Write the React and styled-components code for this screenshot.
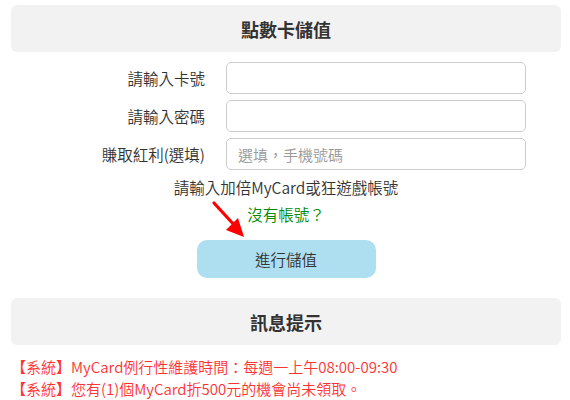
import styled, { createGlobalStyle } from 'styled-components'

const GlobalStyle = createGlobalStyle`
    body {
        margin: 0;
        background: #fff;
        font-family: "Noto Sans CJK TC", "Noto Sans", sans-serif;
        font-weight: 350;
        color: #333;
    }
`

const Page = styled.div`
    width: 550px;
    padding: 5px 9px 0 11px;
`

const Panel = styled.div`
    background-color: #f2f2f2;
    border-radius: 6px;
    height: 47px;
    display: flex;
    align-items: center;
    justify-content: center;
    font-size: 18px;
    font-weight: bold;
    color: #333;
    margin-top: ${props => props.$top || 0}px;
`

const Form = styled.div`
    display: grid;
    grid-template-columns: 194px 300px;
    column-gap: 21px;
    row-gap: 6px;
    margin-top: 10px;
`

const Label = styled.label`
    text-align: right;
    font-size: 15.5px;
    line-height: 32px;
    color: #333;
`

const Input = styled.input`
    box-sizing: border-box;
    height: 32px;
    border: 1px solid #ccc;
    border-radius: 5px;
    padding: 0 11px;
    font-family: inherit;
    font-weight: inherit;
    font-size: 15px;
    color: #333;
    outline: none;

    &::placeholder {
        color: #999;
    }
`

const Center = styled.div`
    position: relative;
    display: flex;
    flex-direction: column;
    align-items: center;
    margin-top: 4px;
`

const Note = styled.div`
    font-size: 15.5px;
    line-height: 27px;
    color: ${props => props.$color || '#333'};
`

const Button = styled.button`
    width: 179px;
    height: 38px;
    margin-top: 12px;
    border: none;
    border-radius: 10px;
    background-color: #addff0;
    color: #333;
    font-family: inherit;
    font-weight: inherit;
    font-size: 15.5px;
    cursor: pointer;
`

const Arrow = styled.svg`
    position: absolute;
    left: 200px;
    top: 26px;
`

const Messages = styled.div`
    margin-top: 11px;
    color: #ff3333;
    font-size: 15px;
    line-height: 22px;
`

const App = () => {
    return (
        <>
            <GlobalStyle />
            <Page>
                <Panel>點數卡儲值</Panel>
                <Form>
                    <Label>請輸入卡號</Label>
                    <Input type="text" />
                    <Label>請輸入密碼</Label>
                    <Input type="password" />
                    <Label>賺取紅利(選填)</Label>
                    <Input type="text" placeholder="選填，手機號碼" />
                </Form>
                <Center>
                    <Note>請輸入加倍MyCard或狂遊戲帳號</Note>
                    <Note $color="#008a00">沒有帳號？</Note>
                    <Button>進行儲值</Button>
                    <Arrow width="40" height="42" viewBox="0 0 40 42">
                        <line x1="3" y1="3" x2="25" y2="27" stroke="#f00" strokeWidth="3.2" strokeLinecap="round" />
                        <polygon points="33,37 15,30 27,18" fill="#f00" />
                    </Arrow>
                </Center>
                <Panel $top={20}>訊息提示</Panel>
                <Messages>
                    <div>【系統】MyCard例行性維護時間：每週一上午08:00-09:30</div>
                    <div>【系統】您有(1)個MyCard折500元的機會尚未領取。</div>
                </Messages>
            </Page>
        </>
    )
}

export default App
